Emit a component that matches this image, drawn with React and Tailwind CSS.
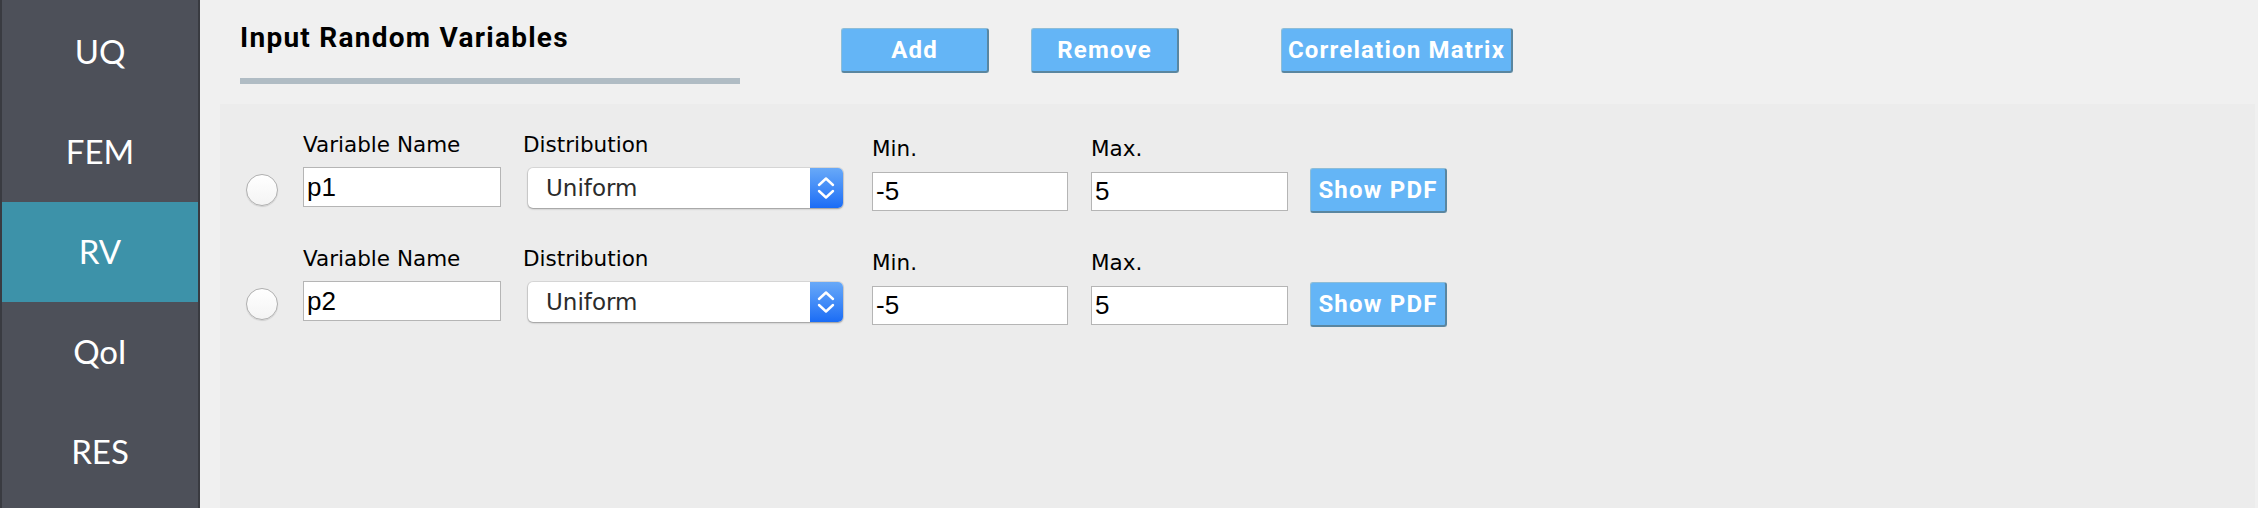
import React from 'react'

const navItems = ['UQ', 'FEM', 'RV', 'QoI', 'RES']

const variables = [
  { name: 'p1', dist: 'Uniform', min: '-5', max: '5' },
  { name: 'p2', dist: 'Uniform', min: '-5', max: '5' },
]

function BlueButton({ children, className = '' }) {
  return (
    <button
      className={`flex items-center justify-center bg-[#64b5f6] text-white font-bold rounded-[3px] border-t border-l border-b-2 border-r-2 border-t-[#8dbdd8] border-l-[#8dbdd8] border-b-[#5a86a0] border-r-[#5a86a0] font-['Roboto',sans-serif] text-[24px] leading-none tracking-[0.05em] ${className}`}
    >
      {children}
    </button>
  )
}

function Field({ label, value, width }) {
  return (
    <div className="flex flex-col pt-[5px]">
      <div className="h-[21px] text-[21.5px] leading-[21px] text-black font-['DejaVu_Sans',sans-serif]">{label}</div>
      <div
        className={`mt-[13px] h-[39px] ${width} bg-white border border-[#b5b5b5] pl-[3px] flex items-center text-[26px] text-black font-['Liberation_Sans',sans-serif]`}
      >
        {value}
      </div>
    </div>
  )
}

function Chevrons() {
  return (
    <svg width="33" height="40" viewBox="0 0 33 40" fill="none" stroke="white" strokeWidth="2.4" strokeLinecap="round" strokeLinejoin="round">
      <path d="M9 17 L16 10.5 L23 17" />
      <path d="M9 23 L16 29.5 L23 23" />
    </svg>
  )
}

function VariableRow({ v }) {
  return (
    <div className="flex items-start h-[80px] pl-[26px]">
      {/* radio */}
      <div className="mt-[41px] w-[32px] h-[32px] rounded-full border border-[#b0b0b0] bg-gradient-to-b from-white to-[#f4f4f4] shadow-[0_1px_1px_rgba(0,0,0,0.12)]"></div>

      {/* variable name */}
      <div className="ml-[25px] flex flex-col">
        <div className="mt-[1px] h-[21px] text-[21.5px] leading-[21px] text-black font-['DejaVu_Sans',sans-serif]">Variable Name</div>
        <div className="mt-[12px] h-[40px] w-[198px] bg-white border border-[#b5b5b5] pl-[3px] flex items-center text-[26px] text-black font-['Liberation_Sans',sans-serif]">
          {v.name}
        </div>
      </div>

      {/* distribution */}
      <div className="ml-[22px] flex flex-col">
        <div className="mt-[1px] h-[21px] text-[21.5px] leading-[21px] text-black font-['DejaVu_Sans',sans-serif]">Distribution</div>
        <div className="mt-[13px] ml-[5px] h-[40px] w-[315px] bg-white rounded-[5px] shadow-[0_0_0_1px_rgba(0,0,0,0.08),0_1px_2px_rgba(0,0,0,0.3)] flex items-center justify-between">
          <span className="pl-[18px] text-[23px] text-[#2b2b2b] font-['DejaVu_Sans',sans-serif]">{v.dist}</span>
          <div className="h-[40px] w-[33px] rounded-r-[5px] bg-gradient-to-b from-[#68a9f8] to-[#1a6cf5]">
            <Chevrons />
          </div>
        </div>
      </div>

      <div className="ml-[29px]">
        <Field label="Min." value={v.min} width="w-[196px]" />
      </div>
      <div className="ml-[23px]">
        <Field label="Max." value={v.max} width="w-[197px]" />
      </div>

      <BlueButton className="ml-[22px] mt-[35px] h-[45px] w-[137px]">Show PDF</BlueButton>
    </div>
  )
}

export default function App() {
  return (
    <div className="flex w-[2258px] h-[508px] bg-[#f0f0f0] overflow-hidden">
      {/* sidebar */}
      <div className="w-[200px] h-full flex flex-col pt-[2px] bg-[#4d5059] border-l-2 border-r-2 border-[#393b41]">
        {navItems.map((item) => (
          <div
            key={item}
            className={`h-[100px] flex items-center justify-center text-white text-[33px] font-['Lato',sans-serif] ${item === 'RV' ? 'bg-[#3d92a9]' : ''}`}
          >
            {item}
          </div>
        ))}
      </div>

      {/* main */}
      <div className="flex-1 flex flex-col">
        <div className="h-[104px] flex items-start pl-[40px]">
          <div className="w-[500px] flex flex-col">
            <div className="mt-[24px] h-[28px] text-[28px] leading-[28px] font-bold text-black font-['Roboto',sans-serif] tracking-[0.045em]">
              Input Random Variables
            </div>
            <div className="mt-[26px] h-[6px] w-[500px] bg-[#b0bcc4]"></div>
          </div>
          <BlueButton className="ml-[101px] mt-[28px] h-[45px] w-[148px]">Add</BlueButton>
          <BlueButton className="ml-[42px] mt-[28px] h-[45px] w-[148px]">Remove</BlueButton>
          <BlueButton className="ml-[102px] mt-[28px] h-[45px] w-[232px]">Correlation Matrix</BlueButton>
        </div>

        <div className="flex-1 ml-[20px] mr-[3px] bg-[#ececec] pt-[29px] flex flex-col gap-[34px]">
          {variables.map((v) => (
            <VariableRow key={v.name} v={v} />
          ))}
        </div>
      </div>
    </div>
  )
}
